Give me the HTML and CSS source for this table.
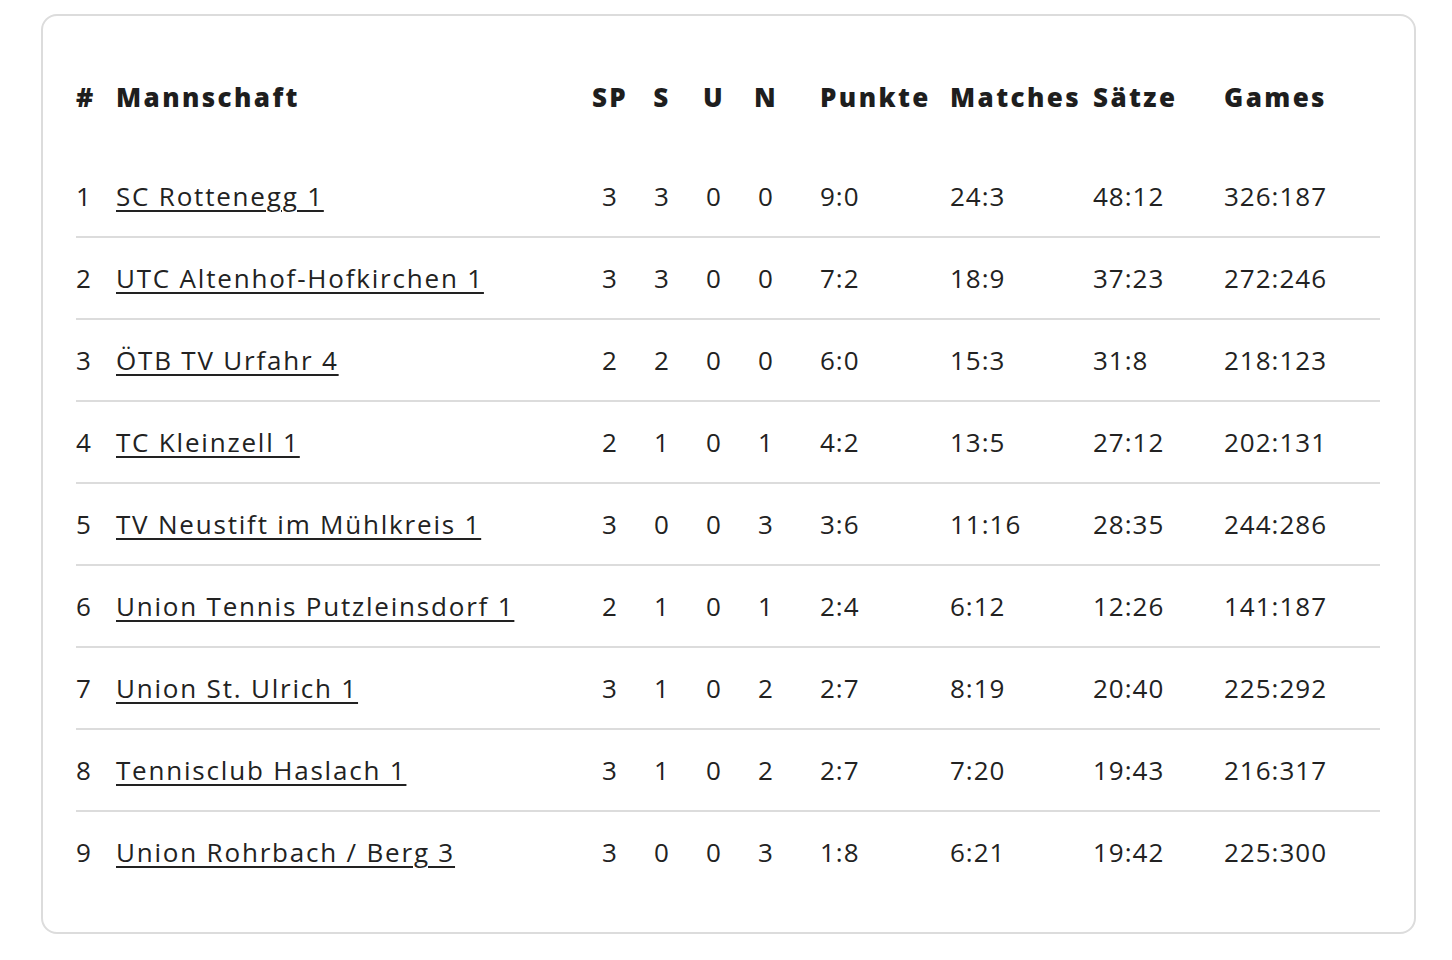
FILE: index.html
```html
<!DOCTYPE html>
<html lang="de">
<head>
<meta charset="utf-8">
<title>Tabelle</title>
<link rel="stylesheet" href="styles.css">
</head>
<body>
<div class="card">
  <table class="standings">
    <colgroup>
      <col class="c-rank"><col class="c-team"><col class="c-sm"><col class="c-sm"><col class="c-sm"><col class="c-sm"><col class="c-pts"><col class="c-mat"><col class="c-set"><col class="c-gam">
    </colgroup>
    <thead>
      <tr>
        <th>#</th><th>Mannschaft</th><th class="ctr">SP</th><th class="ctr">S</th><th class="ctr">U</th><th class="ctr">N</th><th class="pts">Punkte</th><th>Matches</th><th>Sätze</th><th>Games</th>
      </tr>
    </thead>
    <tbody>
      <tr><td>1</td><td><a href="#">SC Rottenegg 1</a></td><td class="ctr">3</td><td class="ctr">3</td><td class="ctr">0</td><td class="ctr">0</td><td class="pts">9:0</td><td>24:3</td><td>48:12</td><td>326:187</td></tr>
      <tr><td>2</td><td><a href="#">UTC Altenhof-Hofkirchen 1</a></td><td class="ctr">3</td><td class="ctr">3</td><td class="ctr">0</td><td class="ctr">0</td><td class="pts">7:2</td><td>18:9</td><td>37:23</td><td>272:246</td></tr>
      <tr><td>3</td><td><a href="#">ÖTB TV Urfahr 4</a></td><td class="ctr">2</td><td class="ctr">2</td><td class="ctr">0</td><td class="ctr">0</td><td class="pts">6:0</td><td>15:3</td><td>31:8</td><td>218:123</td></tr>
      <tr><td>4</td><td><a href="#">TC Kleinzell 1</a></td><td class="ctr">2</td><td class="ctr">1</td><td class="ctr">0</td><td class="ctr">1</td><td class="pts">4:2</td><td>13:5</td><td>27:12</td><td>202:131</td></tr>
      <tr><td>5</td><td><a href="#">TV Neustift im Mühlkreis 1</a></td><td class="ctr">3</td><td class="ctr">0</td><td class="ctr">0</td><td class="ctr">3</td><td class="pts">3:6</td><td>11:16</td><td>28:35</td><td>244:286</td></tr>
      <tr><td>6</td><td><a href="#">Union Tennis Putzleinsdorf 1</a></td><td class="ctr">2</td><td class="ctr">1</td><td class="ctr">0</td><td class="ctr">1</td><td class="pts">2:4</td><td>6:12</td><td>12:26</td><td>141:187</td></tr>
      <tr><td>7</td><td><a href="#">Union St. Ulrich 1</a></td><td class="ctr">3</td><td class="ctr">1</td><td class="ctr">0</td><td class="ctr">2</td><td class="pts">2:7</td><td>8:19</td><td>20:40</td><td>225:292</td></tr>
      <tr><td>8</td><td><a href="#">Tennisclub Haslach 1</a></td><td class="ctr">3</td><td class="ctr">1</td><td class="ctr">0</td><td class="ctr">2</td><td class="pts">2:7</td><td>7:20</td><td>19:43</td><td>216:317</td></tr>
      <tr><td>9</td><td><a href="#">Union Rohrbach / Berg 3</a></td><td class="ctr">3</td><td class="ctr">0</td><td class="ctr">0</td><td class="ctr">3</td><td class="pts">1:8</td><td>6:21</td><td>19:42</td><td>225:300</td></tr>
    </tbody>
  </table>
</div>
</body>
</html>
```
FILE: styles.css
```css
html, body {
  margin: 0;
  padding: 0;
  background: #ffffff;
}

body {
  padding: 14px 36px 0 41px;
  font-family: "Open Sans", "Noto Sans", sans-serif;
  color: #222222;
}

.card {
  width: 1375px;
  box-sizing: border-box;
  border: 2px solid #dcdcdc;
  border-radius: 16px;
  padding: 22px 34px 40px 33px;
  background: #ffffff;
}

.standings {
  width: 1304px;
  table-layout: fixed;
  border-collapse: separate;
  border-spacing: 0;
}

.c-rank { width: 40px; }
.c-team { width: 468px; }
.c-sm { width: 52px; }
.c-pts { width: 158px; }
.c-mat { width: 143px; }
.c-set { width: 131px; }
.c-gam { width: 156px; }

.standings th,
.standings td {
  padding: 0;
  text-align: left;
  vertical-align: middle;
  white-space: nowrap;
}

.standings th {
  height: 118px;
  font-size: 26px;
  font-weight: 800;
  letter-spacing: 2.4px;
  color: #1e1e1e;
}

.standings td {
  height: 80px;
  font-size: 26px;
  font-weight: 400;
  letter-spacing: 1px;
  border-bottom: 2px solid #dcdcdc;
}

.standings tbody tr:last-child td {
  border-bottom: none;
}

.standings .ctr {
  text-align: center;
}

.standings .pts {
  padding-left: 28px;
}

.standings a {
  color: #222222;
  letter-spacing: 1.8px;
  text-decoration: underline;
  text-decoration-thickness: 2px;
  text-underline-offset: 4px;
}
```
